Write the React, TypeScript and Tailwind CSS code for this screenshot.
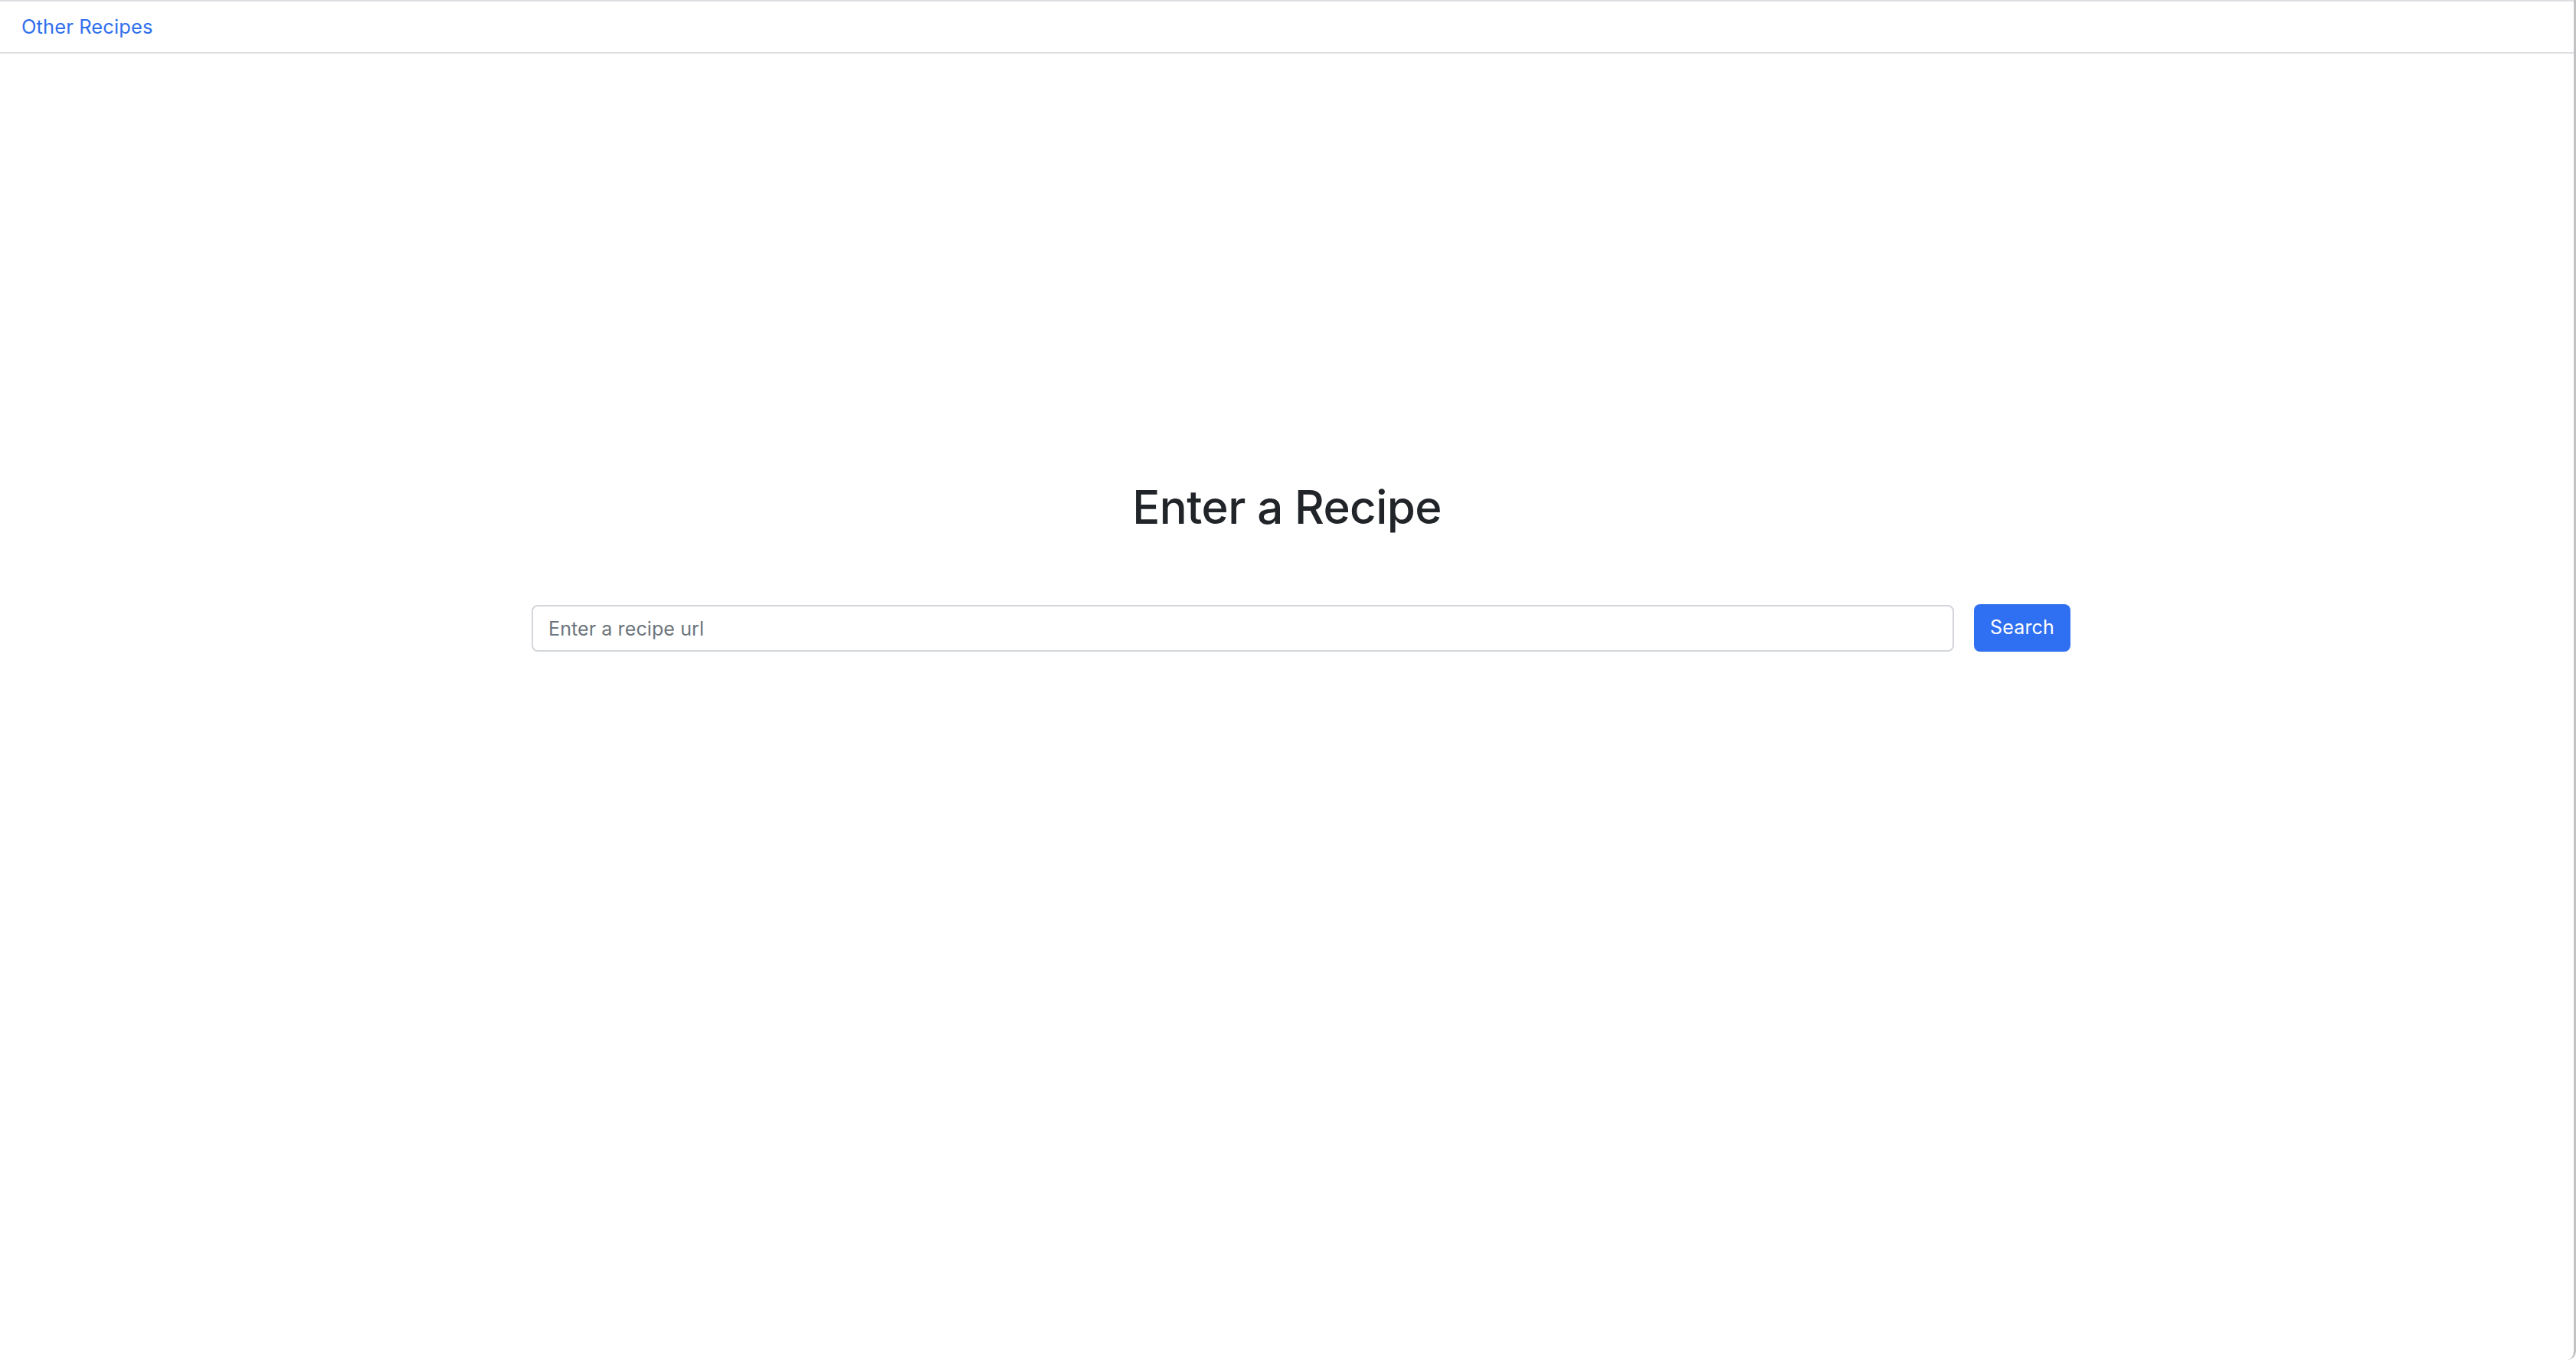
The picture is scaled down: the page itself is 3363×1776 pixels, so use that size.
import React from "react";

export default function App() {
  return (
    <div
      className="w-full h-screen bg-white flex"
      style={{ fontFamily: 'Inter, "Noto Sans", "Liberation Sans", sans-serif' }}
    >
      <div className="flex-1 flex flex-col border-r-[3px] border-[#c2c2c4] rounded-br-[12px] rounded-bl-[12px] overflow-hidden">
        <nav className="h-[70px] border-t-2 border-b-2 border-[#dedfe3] flex items-center pl-[28px]">
          <a className="text-[25.5px] leading-none text-[#2f6fed] tracking-[0.1px]" href="#">
            Other Recipes
          </a>
        </nav>
        <main className="flex flex-col">
          <h1 className="mt-[556px] text-center text-[60px] leading-[72px] font-medium text-[#212529] tracking-[-0.6px]">
            Enter a Recipe
          </h1>
          <div className="mt-[92px] ml-[694px] flex items-start gap-[26px]">
            <input
              className="w-[1857px] h-[61px] border-2 border-[#d3d6da] rounded-[8px] px-[20px] text-[25px] tracking-[0.1px] text-[#212529] placeholder:text-[#6c757d] outline-none"
              placeholder="Enter a recipe url"
            />
            <button className="w-[126px] h-[62px] -mt-[1px] rounded-[8px] bg-[#2f6ff1] text-white text-[25px] tracking-[0.2px]">
              Search
            </button>
          </div>
        </main>
      </div>
    </div>
  );
}
